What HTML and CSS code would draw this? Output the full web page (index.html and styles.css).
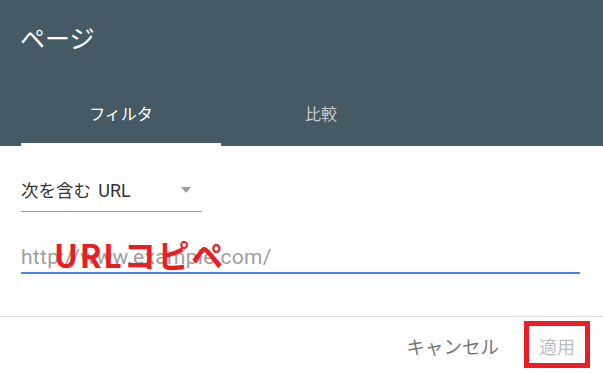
FILE: index.html
```html
<!DOCTYPE html>
<html lang="ja">
<head>
<meta charset="utf-8">
<link rel="stylesheet" href="styles.css">
</head>
<body>
<div class="dialog">
  <header class="header">
    <div class="title">ページ</div>
    <nav class="tabs">
      <div class="tab active">フィルタ</div>
      <div class="tab">比較</div>
    </nav>
  </header>
  <main class="content">
    <div class="select">
      <span class="select-text">次を含む <span class="latin">URL</span></span>
      <span class="arrow"></span>
    </div>
    <div class="field">
      <span class="placeholder">http://www.example.com/</span>
      <span class="annotation">URLコピペ</span>
    </div>
  </main>
  <footer class="footer">
    <button class="btn cancel">キャンセル</button>
    <button class="btn apply">適用</button>
  </footer>
</div>
</body>
</html>
```

FILE: styles.css
```css
* { box-sizing: border-box; }
html, body { margin: 0; padding: 0; background: #fff; }
body {
  font-family: Roboto, "Noto Sans CJK JP", sans-serif;
  width: 603px;
  height: 374px;
  overflow: hidden;
}
.dialog { display: flex; flex-direction: column; height: 374px; }

.header {
  background: #455a64;
  height: 146px;
  display: flex;
  flex-direction: column;
}
.title {
  color: #fff;
  font-size: 25px;
  line-height: 30px;
  padding: 25px 0 0 20px;
  height: 96px;
}
.tabs {
  display: flex;
  padding-left: 21px;
  height: 50px;
}
.tab {
  width: 200px;
  text-align: center;
  font-size: 16px;
  line-height: 20px;
  padding-top: 9px;
  color: rgba(255, 255, 255, 0.7);
  border-bottom: 3px solid transparent;
}
.tab.active { color: #fff; border-bottom-color: #fff; }

.content {
  padding: 0 23px 0 21px;
  height: 171px;
  border-bottom: 1px solid #e0e0e0;
}
.select {
  width: 181px;
  margin-top: 29px;
  height: 37px;
  display: flex;
  align-items: center;
  justify-content: space-between;
  border-bottom: 1px solid #9e9e9e;
  padding: 0 11px 0 0;
}
.select-text {
  font-size: 17.5px;
  color: #333;
  line-height: 24px;
  margin-top: -4px;
}
.select-text .latin { font-size: 18px; margin-left: 3px; }
.arrow {
  width: 0;
  height: 0;
  border-left: 5px solid transparent;
  border-right: 5px solid transparent;
  border-top: 6px solid #9e9e9e;
  margin-top: -6px;
}
.field {
  position: relative;
  margin-top: 31px;
  height: 31px;
  border-bottom: 2px solid #4285f4;
}
.placeholder {
  display: block;
  font-size: 21px;
  letter-spacing: 0.3px;
  line-height: 26px;
  color: #9e9e9e;
  padding-top: 1px;
}
.annotation {
  position: absolute;
  left: 33px;
  top: -8px;
  font-family: "Noto Sans CJK JP", sans-serif;
  font-weight: 700;
  font-size: 32px;
  letter-spacing: 1.8px;
  line-height: 38px;
  color: #ed1c24;
  white-space: nowrap;
}

.footer {
  display: flex;
  justify-content: flex-end;
  align-items: center;
  padding: 4px 13px 0 0;
}
.btn {
  font-family: Roboto, "Noto Sans CJK JP", sans-serif;
  font-size: 18px;
  line-height: 24px;
  background: none;
  border: none;
  padding: 0;
  margin: 0;
}
.cancel { color: #757575; margin-right: 25px; padding-top: 7px; font-size: 18.5px; }
.apply {
  color: #bdbdbd;
  border: 5px solid #ed1c24;
  width: 66px;
  height: 47px;
  padding: 7px 0 0 0;
}
```
